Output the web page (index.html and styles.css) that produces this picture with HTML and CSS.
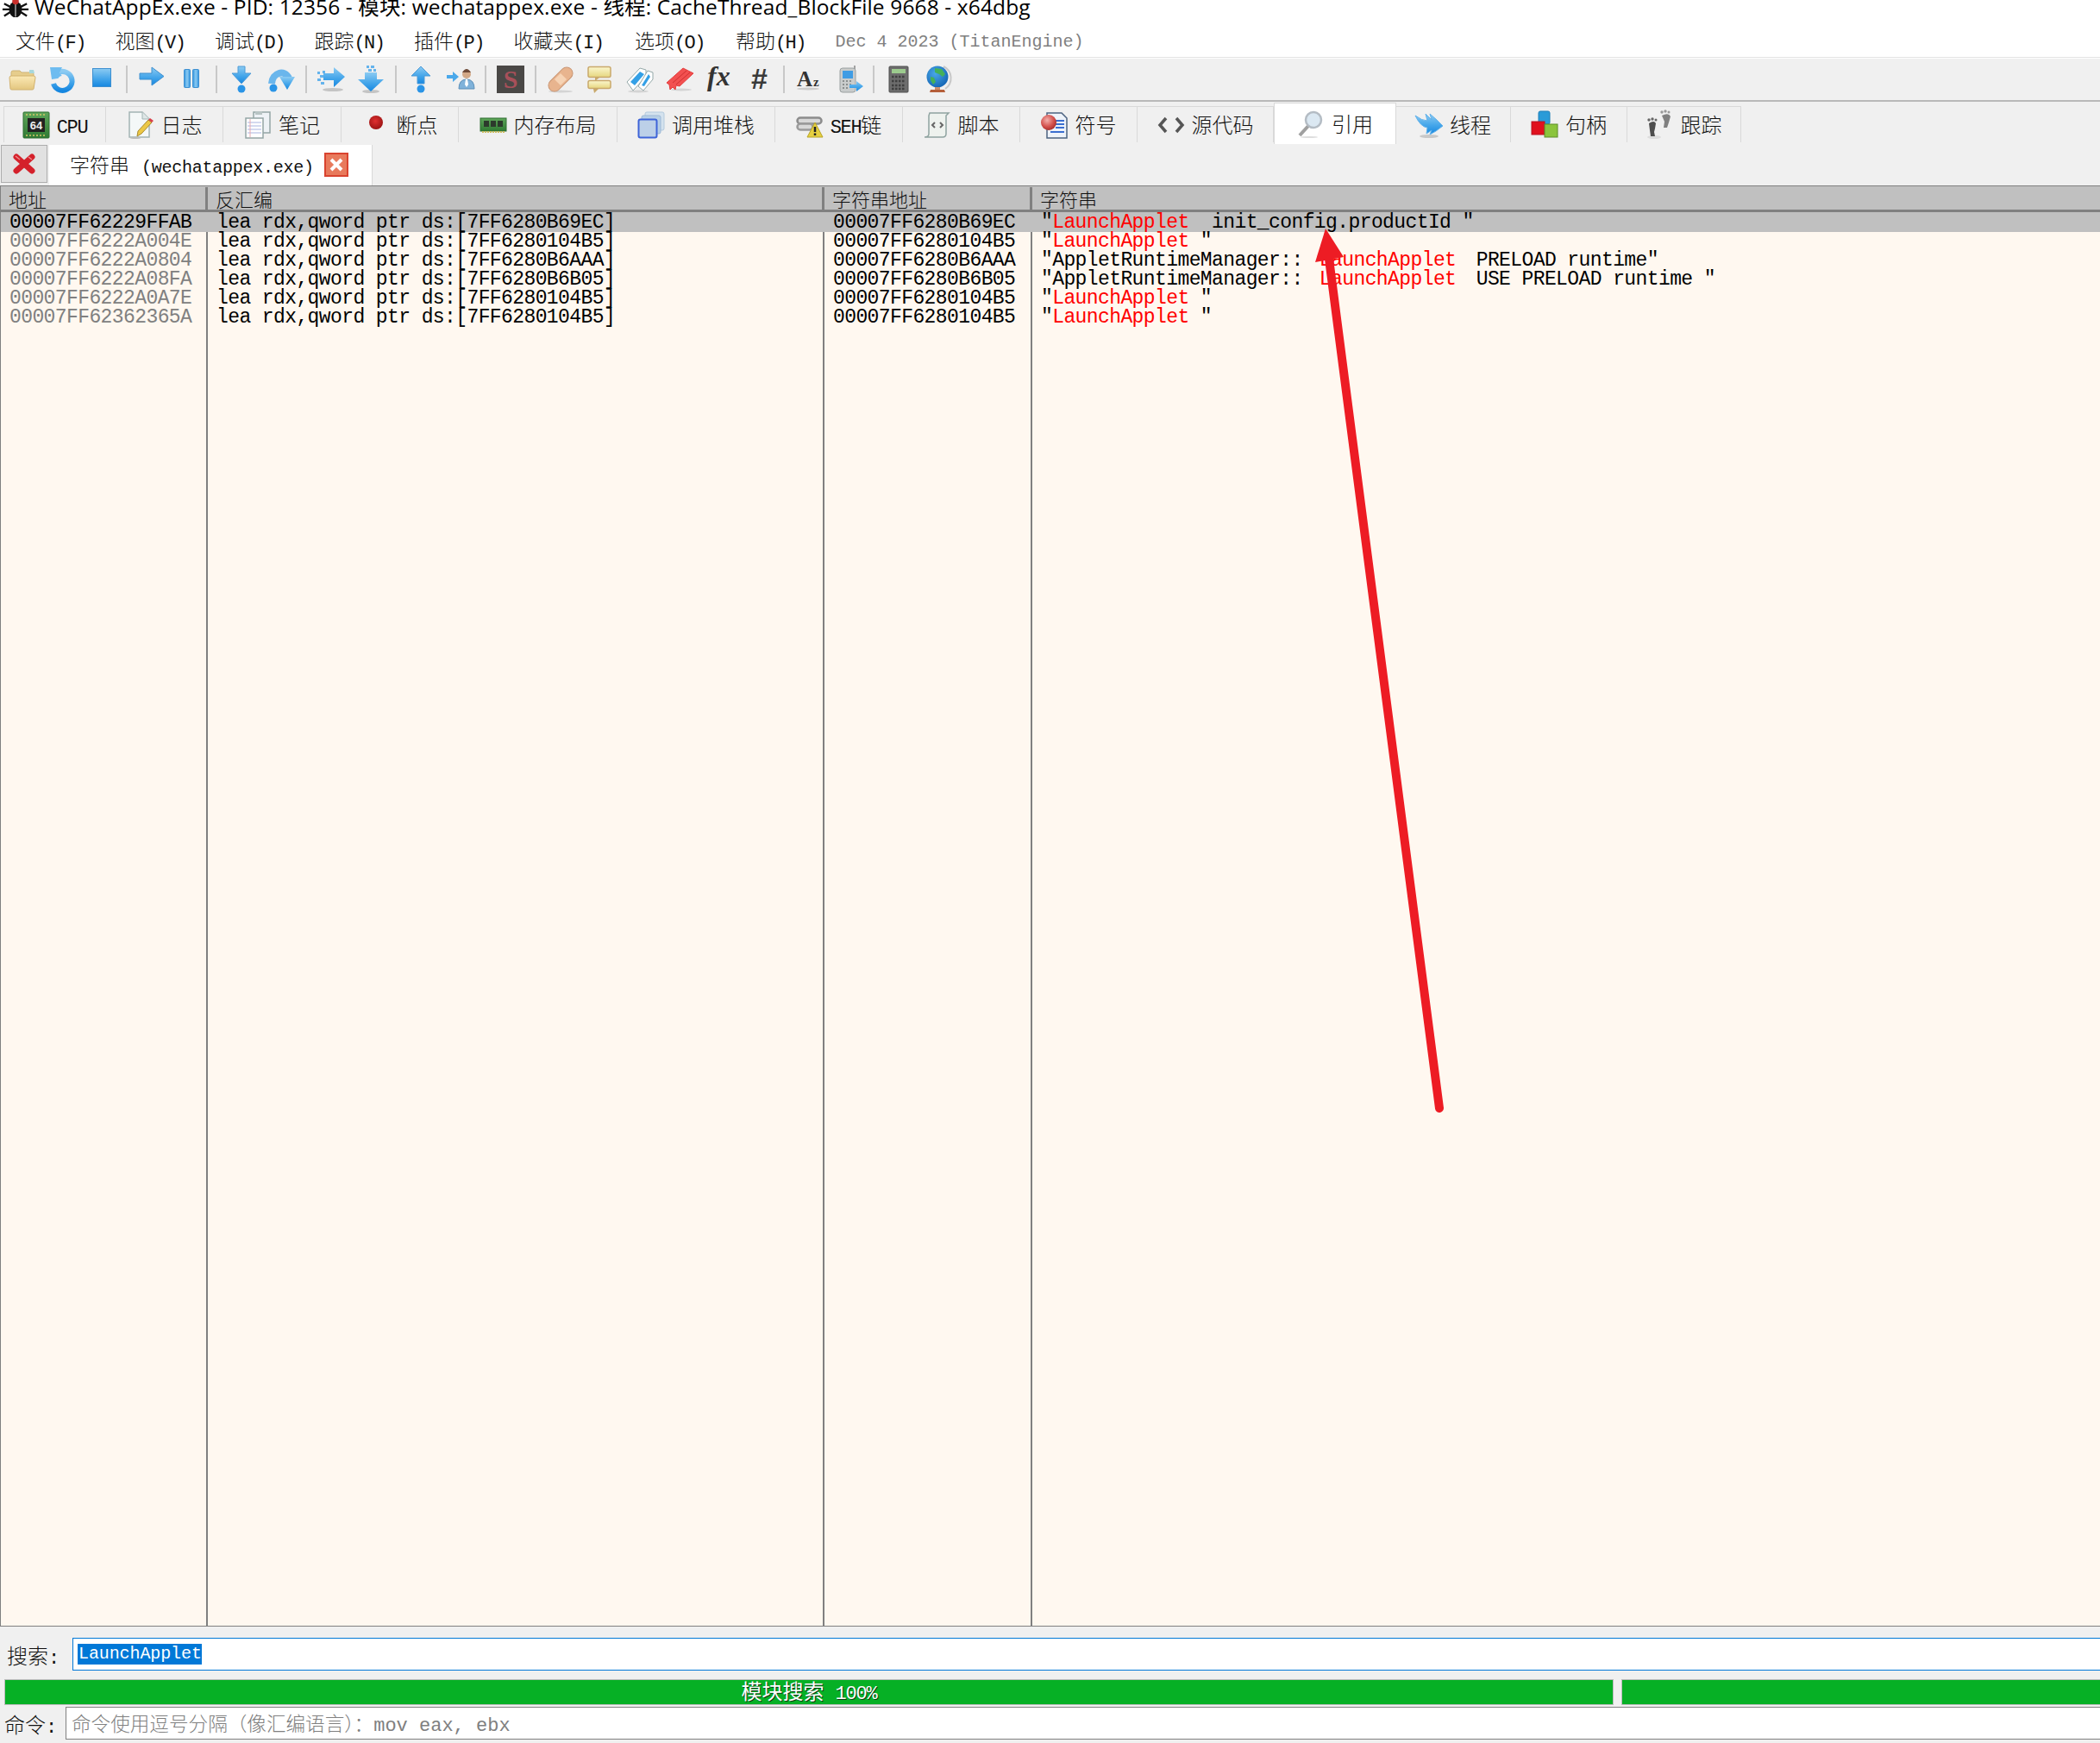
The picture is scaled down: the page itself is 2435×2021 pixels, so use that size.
FILE: index.html
```html
<!DOCTYPE html>
<html lang="zh">
<head>
<meta charset="utf-8">
<title>x64dbg</title>
<link rel="stylesheet" href="styles.css">
</head>
<body>
<svg class="defs" aria-hidden="true">
  <defs>
    <linearGradient id="b" x1="0" y1="0" x2="0" y2="1"><stop offset="0" stop-color="#8ccbf2"/><stop offset=".55" stop-color="#45a6ea"/><stop offset="1" stop-color="#1687e0"/></linearGradient>
    <linearGradient id="bh" x1="0" y1="0" x2="1" y2="0"><stop offset="0" stop-color="#2f93df"/><stop offset=".5" stop-color="#8ccbf2"/><stop offset="1" stop-color="#2f93df"/></linearGradient>
    <linearGradient id="tan" x1="0" y1="0" x2="0" y2="1"><stop offset="0" stop-color="#fbe9b5"/><stop offset="1" stop-color="#e3c67f"/></linearGradient>
    <linearGradient id="yel" x1="0" y1="0" x2="0" y2="1"><stop offset="0" stop-color="#fbf7cf"/><stop offset="1" stop-color="#e6d67e"/></linearGradient>
    <linearGradient id="grn" x1="0" y1="0" x2="0" y2="1"><stop offset="0" stop-color="#5fa65a"/><stop offset="1" stop-color="#2f7a33"/></linearGradient>
    <radialGradient id="ball" cx=".4" cy=".35" r=".7"><stop offset="0" stop-color="#f3b0ac"/><stop offset=".6" stop-color="#d4524e"/><stop offset="1" stop-color="#a32a28"/></radialGradient>
    <radialGradient id="dot" cx=".45" cy=".4" r=".6"><stop offset="0" stop-color="#e03030"/><stop offset="1" stop-color="#9c1414"/></radialGradient>
    <radialGradient id="earth" cx=".4" cy=".35" r=".75"><stop offset="0" stop-color="#49a8e8"/><stop offset="1" stop-color="#0f5fb0"/></radialGradient>
  </defs>
</svg>

<header class="title">
  <svg class="bug" viewBox="0 0 34 20"><path d="M3 4l8 4M1 11h9M3 19l8-5M31 4l-8 4M33 11h-9M31 19l-8-5" stroke="#111" stroke-width="2.4" fill="none"/><ellipse cx="17" cy="11" rx="8" ry="10" fill="#111"/><path d="M17 4v16" stroke="#fff" stroke-width="1"/><circle cx="17" cy="1" r="4" fill="#c9302c"/></svg>
  <span class="title-text">WeChatAppEx.exe - PID: 12356 - 模块: wechatappex.exe - 线程: CacheThread_BlockFile 9668 - x64dbg</span>
</header>

<nav class="menu">
  <span class="menu-item">文件<i>(F)</i></span>
  <span class="menu-item">视图<i>(V)</i></span>
  <span class="menu-item">调试<i>(D)</i></span>
  <span class="menu-item">跟踪<i>(N)</i></span>
  <span class="menu-item">插件<i>(P)</i></span>
  <span class="menu-item wide">收藏夹<i>(I)</i></span>
  <span class="menu-item mid">选项<i>(O)</i></span>
  <span class="menu-item">帮助<i>(H)</i></span>
  <span class="menu-date">Dec 4 2023 (TitanEngine)</span>
</nav>

<div class="toolbar">
  <span class="tb"><svg class="ic" viewBox="0 0 32 32"><path d="M3 8q0-2 2-2h8l2 2h12q2 0 2 2v6H3z" fill="#e6cd8c" stroke="#cfb474"/><path d="M24 5h5l1 4h-6z" fill="#a8d8dc"/><path d="M1 14q0-2 2-2h26q2 0 2 2l-2 13q0 1-2 1H4q-2 0-2-1z" fill="url(#tan)" stroke="#d2b26e"/></svg></span>
  <span class="tb"><svg class="ic" viewBox="0 0 32 32"><path d="M13 7.500A11 11 0 1 1 6 21" fill="none" stroke="url(#b)" stroke-width="6"/><path d="M2 2l14 0-3 6 4 6-13 2z" fill="#6ebcf0"/><circle cx="16" cy="17" r="5" fill="#f0f0f0"/></svg></span>
  <span class="tb"><svg class="ic" viewBox="0 0 32 32"><rect x="5.500" y="3.500" width="21" height="21" fill="url(#b)" stroke="#3d8fd0"/></svg></span>
  <span class="sep"></span>
  <span class="tb"><svg class="ic" viewBox="0 0 32 32"><path d="M2 9h14V2l14 10.500L16 23v-7H2z" fill="url(#b)" stroke="#3d8fd0"/></svg></span>
  <span class="tb"><svg class="ic" viewBox="0 0 32 32"><rect x="7.500" y="4.500" width="7" height="21" rx="1" fill="url(#bh)" stroke="#3d8fd0"/><rect x="17.500" y="4.500" width="7" height="21" rx="1" fill="url(#bh)" stroke="#3d8fd0"/></svg></span>
  <span class="sep"></span>
  <span class="tb"><svg class="ic" viewBox="0 0 32 32"><path d="M12 1h8v8h7L16 21 5 9h7z" fill="url(#b)" stroke="#4d9bd8"/><circle cx="16" cy="27" r="4.500" fill="#2a94e6"/></svg></span>
  <span class="tb"><svg class="ic" viewBox="0 0 32 32"><path d="M5 21C6 8 20 4 25 15" fill="none" stroke="#6ab6ec" stroke-width="8"/><path d="M14 13h18L23 28z" fill="url(#b)"/><circle cx="7" cy="26" r="4.500" fill="#2a94e6"/></svg></span>
  <span class="sep"></span>
  <span class="tb"><svg class="ic" viewBox="0 0 32 32"><ellipse cx="18" cy="28" rx="12" ry="2" fill="#c4c4c4"/><path d="M0 7h3v3H0zM3 11h4v3H3zM0 15h4v3H0zM4 19h4v3H4zM6 6h3v3H6z" fill="#64b3ec"/><path d="M7 9h12V2l13 11-13 12v-8H7z" fill="url(#b)"/></svg></span>
  <span class="tb"><svg class="ic" viewBox="0 0 32 32"><ellipse cx="16" cy="30" rx="10" ry="2" fill="#c4c4c4"/><path d="M11 0h3v3h-3zM16 0h4v3h-4zM13 4h4v3h-4zM19 4h3v3h-3z" fill="#64b3ec"/><path d="M9 8h14v8h8L16 30 1 16h8z" fill="url(#b)"/></svg></span>
  <span class="sep"></span>
  <span class="tb"><svg class="ic" viewBox="0 0 32 32"><path d="M16 1l11 11h-7v9h-8v-9H5z" fill="url(#b)" stroke="#4d9bd8"/><circle cx="16" cy="27" r="4.500" fill="#2a94e6"/></svg></span>
  <span class="tb"><svg class="ic" viewBox="0 0 32 32"><path d="M0 11h7V7l7 6-7 6v-4H0z" fill="#4aa8ea"/><circle cx="23" cy="10" r="5" fill="#d2a887"/><path d="M18 8q5-8 10 0z" fill="#6e4a38"/><path d="M14 27q0-11 9-11t9 11z" fill="#7fb2da" stroke="#5c8fb8"/><path d="M22 16h2l1 6-2 3-2-3z" fill="#fff"/></svg></span>
  <span class="sep"></span>
  <span class="tb"><svg class="ic" viewBox="0 0 32 32"><rect x="0" y="0" width="32" height="32" fill="#4a4846"/><text class="ic-s" x="16" y="26">S</text></svg></span>
  <span class="sep"></span>
  <span class="tb"><svg class="ic" viewBox="0 0 32 32"><ellipse cx="16" cy="30" rx="14" ry="1.500" fill="#d4d4d4"/><rect x="-1" y="9" width="34" height="14" rx="7" transform="rotate(-45 16 16)" fill="#e8b48e" stroke="#c99674"/><rect x="11" y="11" width="10" height="10" transform="rotate(-45 16 16)" fill="#f6d3b4"/></svg></span>
  <span class="tb"><svg class="ic" viewBox="0 0 32 32"><rect x="2" y="1.500" width="26" height="12" rx="2" fill="url(#yel)" stroke="#c9a96c" stroke-width="1.500"/><path d="M10 14v4l5-4z" fill="#c9a96c"/><rect x="2" y="17.500" width="26" height="9" rx="2" fill="url(#yel)" stroke="#c9a96c" stroke-width="1.500"/><path d="M8 27l1 5 5-5z" fill="#c9a96c"/></svg></span>
  <span class="tb"><svg class="ic" viewBox="0 0 32 32"><ellipse cx="14" cy="30" rx="12" ry="1.500" fill="#d4d4d4"/><path d="M1 19L16 3l7 2v8L8 29z" fill="#fff" stroke="#94a8a8"/><path d="M5 19L16 7l5 3-11 13z" fill="#34a0e6"/><path d="M14 24L25 6l6 2v8L20 29z" fill="#fff" stroke="#94a8a8"/><path d="M18 23l8-13 2 3-7 11z" fill="#34a0e6"/></svg></span>
  <span class="tb"><svg class="ic" viewBox="0 0 32 32"><ellipse cx="18" cy="28" rx="12" ry="1.500" fill="#d4d4d4"/><path d="M1 20L20 3l12 6-16 15-4-1-1 5-3-3-3 3-1-6z" fill="#f25050" stroke="#e43c3c"/><path d="M8 20L24 6M12 22L28 8" stroke="#cf3030" fill="none"/></svg></span>
  <span class="tb"><svg class="ic" viewBox="0 0 32 32"><text class="ic-fx" x="2" y="23">fx</text></svg></span>
  <span class="tb"><svg class="ic" viewBox="0 0 32 32"><text class="ic-hash" x="16" y="27">#</text></svg></span>
  <span class="sep"></span>
  <span class="tb"><svg class="ic" viewBox="0 0 32 32"><ellipse cx="15" cy="27" rx="13" ry="1.500" fill="#ccc"/><text class="ic-a" x="2" y="24">A</text><text class="ic-z" x="21" y="24">z</text></svg></span>
  <span class="tb"><svg class="ic shift" viewBox="0 0 32 32"><path d="M20 0v4" stroke="#888" stroke-width="1.500"/><rect x="3" y="3" width="18" height="28" rx="3" fill="#c9cccc" stroke="#9aa0a0"/><rect x="6" y="6" width="12" height="9" fill="#3f9ce4"/><path d="M6 18h12M6 22h12M6 26h8" stroke="#8a8e8e" stroke-width="2" stroke-dasharray="2 2"/><path d="M14 22h8v-4l8 6-8 6v-4h-8z" fill="url(#b)"/></svg></span>
  <span class="sep"></span>
  <span class="tb"><svg class="ic" viewBox="0 0 32 32"><rect x="5" y="1" width="22" height="30" rx="1" fill="#6d6d6d" stroke="#4e4e4e"/><rect x="8" y="4" width="16" height="5" fill="#9ccb8e"/><path d="M8 13h16M8 18h16M8 23h16M8 27h16" stroke="#3f3f3f" stroke-width="2.500" stroke-dasharray="2.500 1.500"/></svg></span>
  <span class="tb"><svg class="ic" viewBox="0 0 32 32"><path d="M22 1A15 15 0 0 1 24 27" fill="none" stroke="#c8c8c8" stroke-width="2"/><circle cx="15" cy="13" r="12.500" fill="url(#earth)"/><path d="M12 3l8 1 4 6-3 3-4-3-5-2zM7 13l4 1 2 5-3 3-3-5z" fill="#44b05a"/><path d="M7 28h16l1 3H6z" fill="#b55f3a"/><path d="M12 25h6v3h-6z" fill="#c98d6e"/></svg></span>
</div>

<div class="tabs">
  <span class="tab t-cpu"><svg class="ic" viewBox="0 0 32 32"><rect x="1" y="1" width="30" height="30" rx="1" fill="url(#grn)" stroke="#2f6e30"/><path d="M5 3v26M9 3v26M13 3v26M17 3v26M21 3v26M25 3v26" stroke="#d8c66a" stroke-width="1.500" stroke-dasharray="2 22"/><rect x="6" y="8" width="20" height="16" fill="#222"/><text class="ic-64" x="16" y="21">64</text></svg><span><i>CPU</i></span></span>
  <span class="tab t-log"><svg class="ic" viewBox="0 0 32 32"><path d="M3 1h15l8 8v21H3z" fill="#f4f8f8" stroke="#a3b4b4" stroke-width="1.500"/><path d="M18 1v8h8" fill="#dfe7e7" stroke="#a3b4b4"/><path d="M12 29l1-6 12-13 4 3-12 13z" fill="#ecc845" stroke="#a88a30"/><path d="M25 10l2-2 4 3-2 2z" fill="#d9404a"/><ellipse cx="10" cy="31" rx="6" ry="1" fill="#bbb"/></svg><span>日志</span></span>
  <span class="tab t-note"><svg class="ic" viewBox="0 0 32 32"><rect x="11" y="1" width="19" height="24" fill="#eef2f6" stroke="#94a5a5" stroke-width="1.500"/><rect x="13" y="0" width="8" height="4" fill="#b8c4c4"/><rect x="2" y="8" width="20" height="23" fill="#fff" stroke="#94a5a5" stroke-width="1.500"/><path d="M4 13h16M4 17h16M4 21h16M4 25h16" stroke="#a8b4e0"/><path d="M7 9v21" stroke="#e8a8b0"/></svg><span>笔记</span></span>
  <span class="tab t-bp"><svg class="ic" viewBox="0 0 32 32"><circle cx="16" cy="13" r="8" fill="url(#dot)"/></svg><span>断点</span></span>
  <span class="tab t-mem"><svg class="ic" viewBox="0 0 32 32"><rect x="1" y="8" width="30" height="15" fill="url(#grn)" stroke="#2f6e30"/><rect x="5" y="11" width="6" height="7" fill="#2c3a2c"/><rect x="13" y="11" width="6" height="7" fill="#2c3a2c"/><rect x="21" y="11" width="6" height="7" fill="#2c3a2c"/><path d="M3 24h26" stroke="#cdbb5e" stroke-width="2" stroke-dasharray="2 1"/></svg><span>内存布局</span></span>
  <span class="tab t-stk"><svg class="ic" viewBox="0 0 32 32"><rect x="9" y="1" width="22" height="21" rx="2" fill="#d4e2ee" stroke="#b4cade"/><rect x="5" y="5" width="22" height="21" rx="2" fill="#b8d0e6" stroke="#9cb8d6"/><rect x="1.500" y="9.500" width="21" height="21" rx="2" fill="#bcd0e8" stroke="#3e64d8" stroke-width="2"/></svg><span>调用堆栈</span></span>
  <span class="tab t-seh"><svg class="ic" viewBox="0 0 32 32"><rect x="1.500" y="7.500" width="28" height="7" rx="3.500" fill="#d8d8d8" stroke="#8c8c8c" stroke-width="2.500"/><rect x="1.500" y="14.500" width="18" height="7" rx="3.500" fill="#d8d8d8" stroke="#9a9a9a" stroke-width="2.500"/><path d="M22 13l9 17H13z" fill="#e6d040" stroke="#b8a428"/><path d="M22 18v6M22 25.500v2.500" stroke="#222" stroke-width="2.500"/></svg><span><i>SEH</i>链</span></span>
  <span class="tab t-scr"><svg class="ic" viewBox="0 0 32 32"><path d="M7 2h22l-3 3v21q0 4-4 4H1q5 0 5-4V5z" fill="#eef2ee" stroke="#8fa3a0" stroke-width="1.500"/><path d="M13 13l-3 3 3 3M19 13l3 3-3 3" fill="none" stroke="#666" stroke-width="2"/></svg><span>脚本</span></span>
  <span class="tab t-sym"><svg class="ic" viewBox="0 0 32 32"><path d="M7 2h17l6 6v23H7z" fill="#eef3fa" stroke="#4c6380" stroke-width="1.500"/><path d="M17 11h10M17 15h10M17 19h10M11 24h16" stroke="#3a6ed0" stroke-width="2"/><circle cx="9" cy="13" r="9" fill="url(#ball)"/></svg><span>符号</span></span>
  <span class="tab t-src"><svg class="ic" viewBox="0 0 32 32"><path d="M10 8l-7 8 7 8M22 8l7 8-7 8" fill="none" stroke="#555" stroke-width="3.500"/></svg><span>源代码</span></span>
  <span class="tab t-ref active"><svg class="ic" viewBox="0 0 32 32"><path d="M13 18L3 29" stroke="#a0a0a0" stroke-width="4"/><circle cx="19" cy="11" r="9" fill="#dbe8f2" stroke="#b4bcc4" stroke-width="2.500"/><ellipse cx="14" cy="31" rx="10" ry="1" fill="#ddd"/></svg><span>引用</span></span>
  <span class="tab t-thr"><svg class="ic" viewBox="0 0 32 32"><ellipse cx="16" cy="29" rx="11" ry="2" fill="#c8c8c8"/><path d="M0 5q8 6 14 6l-2-8 7 7-2-7 8 7 7 7-8 6-7 4 2-5-6 4 1-7Q6 18 0 5z" fill="url(#b)" stroke="#63b2ea"/></svg><span>线程</span></span>
  <span class="tab t-hnd"><svg class="ic" viewBox="0 0 32 32"><rect x="9" y="0" width="13" height="15" rx="2" fill="#2a9bd8" stroke="#1d7eb8"/><rect x="1" y="12" width="15" height="15" fill="#e0111e" stroke="#b81020"/><rect x="16" y="15" width="15" height="15" fill="#8bc43c" stroke="#5d8c28"/></svg><span>句柄</span></span>
  <span class="tab t-trc"><svg class="ic" viewBox="0 0 32 32"><ellipse cx="9" cy="30" rx="8" ry="2" fill="#ddd"/><path d="M3 14q6-4 8 0l-1 6-1 4 1 5H5l-1-7z" fill="#4e4e4e"/><circle cx="3" cy="10" r="1.700" fill="#666"/><circle cx="7" cy="9" r="1.700" fill="#666"/><circle cx="11" cy="10" r="1.500" fill="#666"/><path d="M18 5q8-4 10 1l-2 7-2 6h-4l1-7z" fill="#808080"/><circle cx="18" cy="1" r="1.700" fill="#999"/><circle cx="22" cy="0" r="1.700" fill="#999"/><circle cx="26" cy="1" r="1.500" fill="#999"/></svg><span>跟踪</span></span>
</div>

<div class="subtabs">
  <span class="close-all"><svg class="x-red" viewBox="0 0 26 24"><path d="M4 4l18 16M22 4L4 20" stroke="#d4212b" stroke-width="7" stroke-linecap="round"/><path d="M3 3l5 4M18 4l4 3" stroke="#ee8a8a" stroke-width="1.500"/></svg></span>
  <span class="subtab"><span class="subtab-text">字符串<i>(wechatappex.exe)</i></span><svg class="x-tab" viewBox="0 0 28 28"><rect x="1" y="1" width="26" height="26" fill="#e87a5c" stroke="#d9432f" stroke-width="2"/><path d="M8 8l12 12M20 8L8 20" stroke="#fff" stroke-width="4"/></svg></span>
</div>

<section class="table">
  <div class="thead">
    <span class="th c1">地址</span>
    <span class="th c2">反汇编</span>
    <span class="th c3">字符串地址</span>
    <span class="th c4">字符串</span>
  </div>
  <div class="tbody">
    <div class="col c1 addr">
      <div class="cell sel">00007FF62229FFAB</div>
      <div class="cell">00007FF6222A004E</div>
      <div class="cell">00007FF6222A0804</div>
      <div class="cell">00007FF6222A08FA</div>
      <div class="cell">00007FF6222A0A7E</div>
      <div class="cell">00007FF62362365A</div>
    </div>
    <div class="col c2">
      <div class="cell sel">lea rdx,qword ptr ds:[7FF6280B69EC]</div>
      <div class="cell">lea rdx,qword ptr ds:[7FF6280104B5]</div>
      <div class="cell">lea rdx,qword ptr ds:[7FF6280B6AAA]</div>
      <div class="cell">lea rdx,qword ptr ds:[7FF6280B6B05]</div>
      <div class="cell">lea rdx,qword ptr ds:[7FF6280104B5]</div>
      <div class="cell">lea rdx,qword ptr ds:[7FF6280104B5]</div>
    </div>
    <div class="col c3">
      <div class="cell sel">00007FF6280B69EC</div>
      <div class="cell">00007FF6280104B5</div>
      <div class="cell">00007FF6280B6AAA</div>
      <div class="cell">00007FF6280B6B05</div>
      <div class="cell">00007FF6280104B5</div>
      <div class="cell">00007FF6280104B5</div>
    </div>
    <div class="col c4">
      <div class="cell sel">"<b>LaunchApplet</b>  init_config.productId "</div>
      <div class="cell">"<b>LaunchApplet</b> "</div>
      <div class="cell">"AppletRuntimeManager:: <b class="after-scope">LaunchApplet</b>  PRELOAD runtime"</div>
      <div class="cell">"AppletRuntimeManager:: <b class="after-scope">LaunchApplet</b>  USE PRELOAD runtime "</div>
      <div class="cell">"<b>LaunchApplet</b> "</div>
      <div class="cell">"<b>LaunchApplet</b> "</div>
    </div>
  </div>
</section>

<div class="search">
  <span class="search-label">搜索<i>:</i></span>
  <div class="search-input"><span class="selected">LaunchApplet</span></div>
</div>

<div class="progress">
  <div class="bar bar-main"><span class="bar-text">模块搜索<i>100%</i></span></div>
  <div class="bar bar-side"></div>
</div>

<div class="command">
  <span class="cmd-label">命令<i>:</i></span>
  <div class="cmd-input">命令使用逗号分隔（像汇编语言）：<i>mov eax, ebx</i></div>
</div>

<svg class="arrow" viewBox="0 0 200 1060"><path d="M41 50L169 1035" stroke="#ed1c24" stroke-width="10" stroke-linecap="round" fill="none"/><path d="M37 15L25 54 58 48z" fill="#ed1c24"/></svg>
</body>
</html>
```
FILE: styles.css
```css
* { box-sizing: border-box; }
html, body { margin: 0; padding: 0; }
body {
  position: relative;
  display: flex;
  flex-direction: column;
  width: 2435px;
  height: 2021px;
  overflow: hidden;
  background: #f0f0f0;
  color: #111;
  font-family: "Noto Sans CJK SC", "Liberation Sans", sans-serif;
  font-size: 22px;
  font-weight: 300;
}
i { font-style: normal; }
.defs { position: absolute; width: 0; height: 0; }

/* title bar */
.title {
  display: flex;
  align-items: flex-start;
  flex: none;
  height: 28px;
  background: #fff;
  padding-left: 2px;
}
.bug { flex: none; width: 32px; height: 20px; }
.title-text {
  margin-left: 6px;
  font-family: "Open Sans", "Noto Sans CJK SC", sans-serif;
  font-size: 24.5px;
  font-weight: 400;
  line-height: 16px;
  white-space: nowrap;
  color: #000;
  letter-spacing: 0.13px;
}

/* menu */
.menu {
  display: flex;
  align-items: center;
  flex: none;
  height: 38px;
  padding: 3px 0 0 18px;
  background: #fff;
  font-size: 23px;
  line-height: 30px;
  white-space: nowrap;
}
.menu-item { flex: none; width: 115.5px; }
.menu-item.wide { width: 140.5px; }
.menu-item.mid { width: 117px; }
.menu-item i {
  font-family: "Liberation Mono", monospace;
  font-size: 22px;
  letter-spacing: -1.6px;
}
.menu-date {
  font-family: "Liberation Mono", monospace;
  font-size: 20px;
  font-weight: 400;
  color: #808080;
}

/* toolbar */
.toolbar {
  display: flex;
  align-items: center;
  flex: none;
  height: 52px;
  padding: 0 0 0 3px;
  background: #f0f0f0;
  border-top: 1px solid #e4e4e4;
  border-bottom: 2px solid #b9b9b9;
  box-shadow: inset 0 1px 0 #fff;
}
.tb {
  display: flex;
  justify-content: center;
  flex: none;
  width: 46px;
  padding-top: 1px;
}
.sep {
  flex: none;
  width: 2px;
  height: 32px;
  margin: 0 5px;
  background: #c8c8c8;
}
.ic { display: block; flex: none; width: 32px; height: 32px; overflow: visible; }
.shift { transform: translateX(3px); }
.ic-s { font: 700 30px "Liberation Serif", serif; fill: #a8505a; text-anchor: middle; }
.ic-fx { font: italic 700 32px "Liberation Serif", serif; fill: #333; }
.ic-hash { font: italic 700 34px "Liberation Sans", sans-serif; fill: #3a3a3a; text-anchor: middle; }
.ic-a { font: 700 25px "Liberation Serif", serif; fill: #333; }
.ic-z { font: 700 15px "Liberation Serif", serif; fill: #333; }
.ic-64 { font: 700 13px "Liberation Sans", sans-serif; fill: #eee; text-anchor: middle; }

/* tab strips */
.tabs {
  display: flex;
  align-items: flex-start;
  flex: none;
  height: 47px;
  padding: 5px 0 0 4px;
}
.tab {
  display: flex;
  align-items: center;
  justify-content: center;
  gap: 8px;
  flex: none;
  height: 42px;
  border-top: 1px solid #d9d9d9;
  border-right: 1px solid #d9d9d9;
  font-size: 24px;
  white-space: nowrap;
}
.tab span { margin-top: -3px; }
.tab i {
  font-family: "Liberation Mono", monospace;
  font-size: 22px;
  font-weight: 400;
  letter-spacing: -1.4px;
}
.t-cpu { width: 119px; border-left: 1px solid #d9d9d9; }
.t-log { width: 136px; }
.t-note { width: 137px; }
.t-bp { width: 136px; }
.t-mem { width: 184px; }
.t-stk { width: 183px; }
.t-seh { width: 148px; }
.t-scr { width: 136px; }
.t-sym { width: 136px; }
.t-src { width: 158px; }
.t-ref { width: 142px; }
.t-thr { width: 133px; }
.t-hnd { width: 135px; }
.t-trc { width: 132px; }
.tab.active {
  height: 48px;
  margin-top: -4px;
  background: #fff;
  border-top: 1px solid #d9d9d9;
  border-left: 1px solid #d9d9d9;
}
.subtabs {
  display: flex;
  align-items: flex-start;
  flex: none;
  height: 50px;
  padding: 3px 0 0 1px;
}
.close-all {
  display: flex;
  align-items: center;
  justify-content: center;
  flex: none;
  width: 54px;
  height: 44px;
  background: #e1e1e1;
  border: 1px solid #adadad;
}
.x-red { width: 26px; height: 24px; }
.subtab {
  display: flex;
  align-items: center;
  flex: none;
  width: 375px;
  height: 47px;
  margin-left: 2px;
  padding-left: 24px;
  background: #fff;
  border-right: 1px solid #d9d9d9;
  font-size: 23px;
  white-space: pre;
}
.subtab-text { width: 295px; margin-top: -4px; }
.subtab-text i {
  margin-left: 14px;
  font-family: "Liberation Mono", monospace;
  font-size: 20px;
  font-weight: 400;
  letter-spacing: -0.25px;
}
.x-tab { flex: none; width: 28px; height: 28px; margin-top: -2px; }

/* table */
.table {
  display: flex;
  flex-direction: column;
  flex: 1;
  min-height: 0;
  background: #fff8f0;
  border-top: 1px solid #808080;
  border-bottom: 1px solid #808080;
  border-left: 1px solid #808080;
}
.thead {
  display: flex;
  flex: none;
  height: 30px;
  padding-top: 1px;
  background: #c0c0c0;
  border-bottom: 3px solid #808080;
}
.th {
  padding-left: 9px;
  font-size: 22px;
  line-height: 26px;
  white-space: nowrap;
  border-right: 3px solid #808080;
}
.th.c4 { border-right: 0; }
.c1 { flex: none; width: 240px; }
.c2 { flex: none; width: 715px; }
.c3 { flex: none; width: 241px; }
.c4 { flex: 1; min-width: 0; }
.tbody { display: flex; flex: 1; min-height: 0; }
.col {
  border-right: 2px solid #808080;
  font-family: "Liberation Mono", monospace;
  font-size: 23px;
  font-weight: 400;
  letter-spacing: -0.6px;
  line-height: 22px;
  color: #000;
}
.col.c4 { border-right: 0; }
.cell { height: 22px; padding-left: 10px; white-space: pre; }
.cell.sel { height: 23px; margin-right: -2px; line-height: 24px; background: #c0c0c0; color: #000; }
.col.c4 .cell.sel { margin-right: 0; }
.addr { color: #808080; }
.col b { font-weight: 400; color: #f00; }
.col b.after-scope { margin: 0 -3px 0 6px; }

/* bottom rows */
.search {
  display: flex;
  align-items: center;
  flex: none;
  height: 61px;
  padding: 3px 0 0 8px;
  font-size: 24px;
}
.search-label { flex: none; width: 76px; }
.search-label i, .cmd-label i {
  font-family: "Liberation Mono", monospace;
  font-weight: 400;
  font-size: 22px;
}
.search-input {
  display: flex;
  align-items: center;
  flex: 1;
  height: 38px;
  padding-left: 5px;
  background: #fff;
  border: 1px solid #0078d7;
  border-right: 0;
}
.selected {
  padding: 0 0 0 1px;
  background: #0078d7;
  color: #fff;
  font-family: "Liberation Mono", monospace;
  font-size: 20px;
  font-weight: 400;
  line-height: 24px;
  letter-spacing: -0.1px;
}
.progress {
  display: flex;
  gap: 9px;
  flex: none;
  height: 30px;
  padding-left: 5px;
}
.bar { background: #06b025; border: 1px solid #bcbcbc; }
.bar-main {
  display: flex;
  align-items: center;
  justify-content: center;
  flex: none;
  width: 1866px;
}
.bar-side { flex: 1; border-right: 0; }
.bar-text {
  color: #fff;
  font-size: 24px;
  font-weight: 400;
  line-height: 28px;
  white-space: pre;
  text-shadow: 1px 1px 0 #0a3a14;
}
.bar-text i {
  margin-left: 13px;
  font-family: "Liberation Mono", monospace;
  font-size: 22px;
  letter-spacing: -1.2px;
}
.command {
  display: flex;
  align-items: center;
  flex: none;
  height: 44px;
  padding: 0 0 2px 5px;
  font-size: 24px;
}
.cmd-label { flex: none; width: 71px; }
.cmd-input {
  flex: 1;
  height: 38px;
  padding-left: 6px;
  background: #fff;
  border: 1px solid #808080;
  border-right: 0;
  color: #808080;
  font-size: 22.6px;
  line-height: 36px;
  white-space: pre;
}
.cmd-input i {
  font-family: "Liberation Mono", monospace;
  font-size: 22px;
  font-weight: 400;
}

/* annotation drawn over the screenshot */
.arrow {
  position: absolute;
  left: 1500px;
  top: 250px;
  width: 200px;
  height: 1060px;
}
```
